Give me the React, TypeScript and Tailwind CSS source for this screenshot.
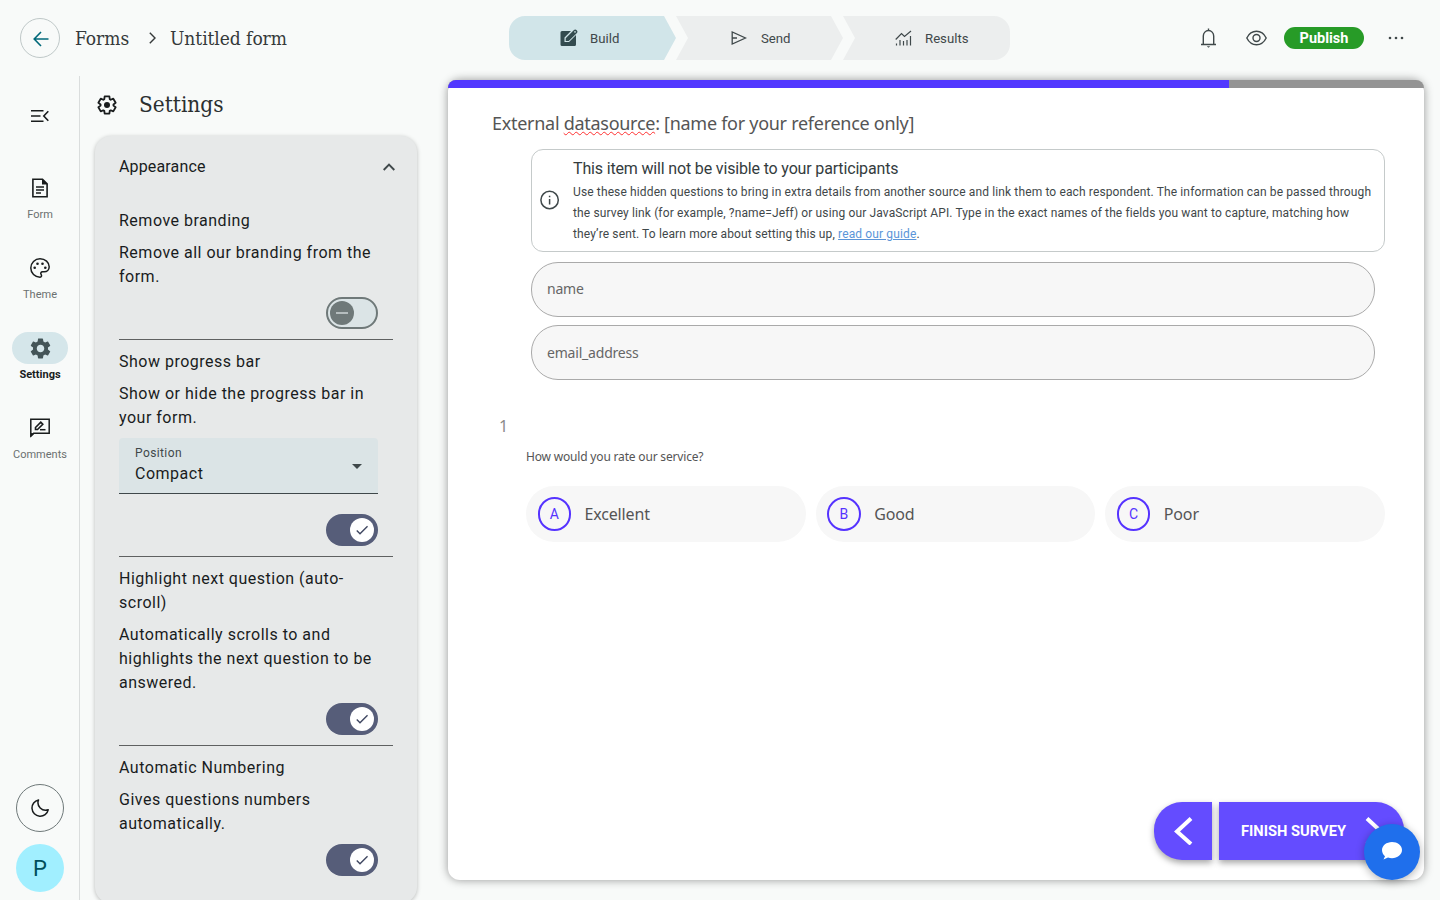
import type { ReactNode } from 'react';
import { MdSettings, MdCheck } from 'react-icons/md';

interface SettingProps {
  title: ReactNode;
  description: ReactNode;
  enabled: boolean;
  last?: boolean;
  children?: ReactNode;
}

function Toggle({ enabled }: { enabled: boolean }) {
  if (!enabled) {
    return (
      <div className="w-[52px] h-8 rounded-full border-2 border-[#6f7979] bg-[#dbe4e6] flex items-center pl-0.5">
        <div className="w-6 h-6 rounded-full bg-[#6f7979] flex items-center justify-center">
          <div className="w-3 h-0.5 bg-[#b5bdbe]" />
        </div>
      </div>
    );
  }
  return (
    <div className="w-[52px] h-8 rounded-full bg-[#565d79] flex items-center justify-end pr-1">
      <div className="w-6 h-6 rounded-full bg-white flex items-center justify-center">
        <MdCheck className="w-4 h-4 text-[#3e4660]" />
      </div>
    </div>
  );
}

function Setting({ title, description, enabled, last, children }: SettingProps) {
  return (
    <div className={last ? 'pb-[27px]' : 'pb-[9px] mb-[10px] border-b border-[#5f6161]'}>
      <h4 className="w-[259px]">{title}</h4>
      <p className="w-[259px] mt-2">{description}</p>
      {children}
      <div className={`flex justify-end w-[259px] ${children ? 'mt-5' : 'mt-2'} ${last ? '' : 'mb-px'}`}>
        <Toggle enabled={enabled} />
      </div>
    </div>
  );
}

function Header() {
  return (
    <header className="h-[76px] shrink-0 flex items-center pl-5 pr-9 relative">
      <div className="w-10 h-10 rounded-full border border-[#bfc8c8] flex items-center justify-center">
        <svg className="w-4 h-4 ml-0.5 mt-px text-[#006879]" viewBox="0 0 16 16" fill="none" stroke="currentColor" strokeWidth="1.600">
          <path d="M15.500 8H1.500M8 1 1.200 8 8 15" />
        </svg>
      </div>
      <nav className="flex items-center ml-[15px] text-[#35393a] font-['Roboto_Slab','DejaVu_Serif_Condensed','DejaVu_Serif',serif] font-light text-[19px]">
        <span className="w-[55px]">Forms</span>
        <svg className="w-[7px] h-3 ml-[19px] mr-[14px]" viewBox="0 0 7 12" fill="none" stroke="currentColor" strokeWidth="1.4">
          <path d="M.8.7 6 6 .8 11.3" />
        </svg>
        <span className="tracking-[-0.05px]">Untitled form</span>
      </nav>

      {/* Build / Send / Results */}
      <div className="absolute left-[509px] top-4 flex w-[501px] h-11 rounded-2xl overflow-hidden text-[13.2px] text-[#3f484a]">
        <div className="w-[167px] flex items-center pl-[51px] bg-[#d1e5e9] [clip-path:polygon(0_0,155px_0,100%_50%,155px_100%,0_100%)]">
          <svg className="w-[18px] h-[18px] mr-3" viewBox="0 0 18 18" fill="#334b4f">
            <path d="M2 2h9L4.500 8.500V13H9l7-7v9.500a1.500 1.500 0 0 1-1.500 1.500H2A1.500 1.500 0 0 1 .5 15.500v-12A1.500 1.500 0 0 1 2 2Z" />
            <path d="M5.700 9.200 13.700 1.200a2 2 0 0 1 3 3L8.700 12H5.700Z" />
            <circle cx="15" cy="2.900" r=".8" fill="#d1e5e9" />
          </svg>
          <span className="pt-0.5">Build</span>
        </div>
        <div className="w-[167px] flex items-center pl-[55px] bg-[#eceeee] [clip-path:polygon(0_0,155px_0,100%_50%,155px_100%,0_100%,12px_50%)]">
          <svg className="w-4 h-4 mr-[14px]" viewBox="0 0 16 16" fill="none" stroke="currentColor" strokeWidth="1.3">
            <path d="M1.200 1.900v12.200L14.500 8ZM1.200 8H6" />
          </svg>
          <span className="pt-0.5">Send</span>
        </div>
        <div className="w-[167px] flex items-center pl-[52px] bg-[#eceeee] [clip-path:polygon(0_0,100%_0,100%_100%,0_100%,12px_50%)]">
          <svg className="w-[17px] h-4 mr-[13px]" viewBox="0 0 17 16" fill="none" stroke="currentColor" strokeWidth="1.2">
            <path d="M.7 9.500 6.500 3.500 9.500 6.500 16 1" />
            <path d="M1.500 13.500V15.500M5 10v5.500M8.500 11v4.500M12 10v5.500M15.500 6v9.500" />
          </svg>
          <span className="pt-0.5">Results</span>
        </div>
      </div>

      <div className="flex items-center ml-auto text-[#3f484a]">
        <svg className="w-4 h-5" viewBox="0 0 16 20" fill="none" stroke="currentColor" strokeWidth="1.4">
          <path d="M2.300 16V8a5.200 5.500 0 0 1 10.400 0v8M0 16.500h15M7.500 .5V3" />
          <path d="M5.800 18.200h3.400L7.500 19.700Z" fill="currentColor" stroke="none" />
        </svg>
        <svg className="w-[21px] h-4 ml-[29px] mb-px" viewBox="0 0 21 16" fill="none" stroke="currentColor" strokeWidth="1.4">
          <path d="M.8 8C3 3.600 6.400 1.300 10.500 1.300S18 3.600 20.200 8C18 12.400 14.600 14.700 10.500 14.700S3 12.400.8 8Z" />
          <circle cx="10.500" cy="8" r="3.500" />
        </svg>
        <button className="w-20 h-[22px] ml-[17px] rounded-full bg-[#279b27] text-white font-bold text-[14.5px] leading-[22px] pt-px">
          Publish
        </button>
        <svg className="w-4 h-1 ml-6" viewBox="0 0 16 4" fill="currentColor">
          <circle cx="2" cy="2" r="1.300" />
          <circle cx="8" cy="2" r="1.300" />
          <circle cx="14" cy="2" r="1.300" />
        </svg>
      </div>
    </header>
  );
}

const navItems = [
  {
    label: 'Form',
    icon: (
      <svg className="w-5 h-5" viewBox="0 0 20 20" fill="none" stroke="currentColor" strokeWidth="1.600">
        <path d="M2.900 1.300h9.600l4.600 4.600v12.800H2.900Z" />
        <path d="M12 1v5.500h5.500Z" fill="currentColor" stroke="none" />
        <path d="M6 9h8M6 12h8M6 15h5" strokeWidth="1.500" />
      </svg>
    ),
  },
  {
    label: 'Theme',
    icon: (
      <svg className="w-5 h-5" viewBox="0 0 20 20" fill="none" stroke="currentColor" strokeWidth="1.500">
        <path d="M10 19.200A9.200 9.200 0 0 1 10 .8c5.200 0 9.200 3.500 9.200 8 0 3-2.200 5-5 5h-1.700c-1.500 0-2.200 1.300-1.400 2.500.9 1.300.4 2.900-1.100 2.900Z" />
        <g fill="currentColor" stroke="none">
          <circle cx="4.700" cy="9.700" r="1.300" />
          <circle cx="7.500" cy="5.700" r="1.300" />
          <circle cx="12.500" cy="5.700" r="1.300" />
          <circle cx="15.300" cy="9.700" r="1.300" />
        </g>
      </svg>
    ),
  },
  { label: 'Settings', active: true, icon: <MdSettings className="w-[25px] h-[25px] text-[#445558]" /> },
  {
    label: 'Comments',
    icon: (
      <svg className="w-5 h-5" viewBox="0 0 20 20" fill="none" stroke="currentColor" strokeWidth="1.500">
        <path d="M.8 18V1.300h18.400v14H3.700Z" />
        <path d="M1 15v4l3.500-3.500Z" fill="currentColor" stroke="none" />
        <path d="M5.500 11.500v-2L10.800 4.200l2 2L7.500 11.500Z" strokeWidth="1.600" />
        <path d="M10 11.700h5.500" />
      </svg>
    ),
  },
];

function Sidebar() {
  return (
    <aside className="w-20 shrink-0 border-r border-[#dadddd] flex flex-col items-center pl-px pb-2 text-[#191c1d]">
      <svg className="w-[18px] h-3 mt-[34px] mb-[50px]" viewBox="0 0 18 12" fill="none" stroke="currentColor" strokeWidth="1.600">
        <path d="M0 .8h12.500M0 6h9.500M0 11.200h12.500M17.300 1.300 12.800 6l4.500 4.700" />
      </svg>
      {navItems.map((item) => (
        <div key={item.label} className="h-20 flex flex-col items-center">
          <div
            className={`w-14 h-8 rounded-full flex items-center justify-center ${item.active ? 'bg-[#d5e6ea]' : ''}`}
          >
            {item.icon}
          </div>
          <span
            className={`mt-[3px] text-[11px] leading-4 ${item.active ? 'font-bold text-[#191c1d]' : 'text-[#6b7070]'}`}
          >
            {item.label}
          </span>
        </div>
      ))}
      <div className="mt-auto w-12 h-12 rounded-full border border-[#6f7979] flex items-center justify-center">
        <svg className="w-[18px] h-[18px]" viewBox="0 0 18 18" fill="none" stroke="currentColor" strokeWidth="1.500" strokeLinejoin="round">
          <path d="M7.500 1A8.200 8.200 0 1 0 17.200 10.800 7.600 7.600 0 0 1 7.500 1Z" />
        </svg>
      </div>
      <div className="mt-3 w-12 h-12 shrink-0 rounded-full bg-[#a1efff] flex items-center justify-center text-[22px] text-[#004e5b]">
        P
      </div>
    </aside>
  );
}

function SettingsPanel() {
  return (
    <section className="w-[322px] ml-[15px] shrink-0 text-[#191c1d]">
      <div className="h-[60px] flex items-center pb-0.5">
        <svg className="w-6 h-6" viewBox="0 0 24 24" fill="none" stroke="currentColor" strokeWidth="2.100" strokeLinejoin="round">
          <path d="m9.250 22-.4-3.200q-.325-.125-.612-.3-.288-.175-.563-.375L4.700 19.375l-2.750-4.750 2.575-1.950Q4.500 12.500 4.500 12.337v-.675q0-.162.025-.337L1.950 9.375l2.750-4.750 2.975 1.250q.275-.2.575-.375.3-.175.6-.3l.4-3.200h5.500l.4 3.200q.325.125.613.3.287.175.562.375l2.975-1.250 2.750 4.750-2.575 1.950q.025.175.025.337v.675q0 .163-.05.338l2.575 1.950-2.750 4.750-2.950-1.250q-.275.200-.575.375-.3.175-.6.300l-.4 3.200Z" transform="translate(1.700 1.700) scale(.86)" />
          <circle cx="12" cy="12" r="3" fill="currentColor" stroke="none" />
        </svg>
        <h2 className="ml-5 text-[#2b2f30] font-['Roboto_Slab','DejaVu_Serif_Condensed','DejaVu_Serif',serif] font-light text-[22.4px]">
          Settings
        </h2>
      </div>

      <div className="rounded-2xl bg-[#e7e9e9] px-6 shadow-[0_1px_4px_rgba(0,0,0,0.25)] text-base leading-6 tracking-[0.5px]">
        <div className="h-[73px] flex justify-between pt-[19px] tracking-[0.15px]">
          <h3>Appearance</h3>
          <svg className="w-3 h-2 mt-2 mr-[-2px]" viewBox="0 0 12 8" fill="none" stroke="#3f484a" strokeWidth="1.900">
            <path d="M.7 7 6 1.700 11.300 7" />
          </svg>
        </div>

        <Setting title="Remove branding" description="Remove all our branding from the form." enabled={false} />
        <Setting title="Show progress bar" description="Show or hide the progress bar in your form." enabled>
          <div className="w-[259px] h-14 mt-2 rounded-t bg-[#dbe4e6] border-b border-[#3f484a] flex items-center justify-between px-4">
            <div>
              <div className="text-xs leading-4 mb-px tracking-[0.4px] text-[#3f484a]">Position</div>
              <div>Compact</div>
            </div>
            <svg className="w-2.5 h-[5px] mt-px" viewBox="0 0 10 5" fill="#3f484a">
              <path d="M0 0h10L5 5Z" />
            </svg>
          </div>
        </Setting>
        <Setting
          title="Highlight next question (auto-scroll)"
          description="Automatically scrolls to and highlights the next question to be answered."
          enabled
        />
        <Setting title="Automatic Numbering" description="Gives questions numbers automatically." enabled last />
      </div>
    </section>
  );
}

function DatasourceQuestion() {
  return (
    <div className="pl-11">
      <h1 className="pt-[21px] text-[18px] leading-7 tracking-[-0.28px] text-[#555]">
        External{' '}
        <span className="underline decoration-wavy decoration-[#ff3030] decoration-1 underline-offset-1">datasource</span>:
        [name for your reference only]
      </h1>
      <div className="ml-[39px] mt-3 w-[854px] h-[103px] rounded-xl border border-[#c5caca] flex items-center text-[#3f484a] font-[Roboto,sans-serif]">
        <svg className="w-5 h-5 ml-2 mr-[13px] mb-0.5 shrink-0" viewBox="0 0 20 20" fill="none" stroke="currentColor" strokeWidth="1.500">
          <circle cx="9.600" cy="10" r="8.700" />
          <path d="M9.600 9v5.500M9.600 5.700v1.600" />
        </svg>
        <div className="whitespace-nowrap">
          <h5 className="text-base leading-6 tracking-[-0.16px] text-[#343c3e]">This item will not be visible to your participants</h5>
          <p className="pt-px -mb-px text-xs leading-[21px] tracking-[0.13px]">
            Use these hidden questions to bring in extra details from another source and link them to each respondent. The information can be passed through
            <br />
            the survey link (for example, ?name=Jeff) or using our JavaScript API. Type in the exact names of the fields you want to capture, matching how
            <br />
            they’re sent. To learn more about setting this up,{' '}
            <a className="underline text-[#5b95d8]">read our guide</a>.
          </p>
        </div>
      </div>
      {['name', 'email_address'].map((field) => (
        <div
          key={field}
          className="ml-[39px] mt-[10px] mb-[-2px] w-[844px] h-[55px] rounded-[27px] border border-[#aaa] bg-[#f7f7f7] flex items-center pl-[15px] pb-px last:pb-0 text-sm tracking-[-0.2px] text-[#666]"
        >
          {field}
        </div>
      ))}
    </div>
  );
}

const answers = [
  { letter: 'A', text: 'Excellent' },
  { letter: 'B', text: 'Good' },
  { letter: 'C', text: 'Poor' },
];

function RatingQuestion() {
  return (
    <div className="pt-9 pr-[39px] text-[#555]">
      <div className="pl-[51px] text-base leading-6 text-[#8a8a8a]">1</div>
      <div className="pl-[78px] mt-[10px] text-xs leading-[18px] tracking-[-0.18px]">How would you rate our service?</div>
      <div className="pl-[78px] mt-5 grid grid-cols-3 gap-2.5">
        {answers.map((answer) => (
          <div key={answer.letter} className="h-14 rounded-[28px] bg-[#f7f7f7] flex items-center pl-[11.5px]">
            <div className="w-[33.5px] h-[33.5px] rounded-full border-2 border-[#5533ff] text-[#5533ff] text-sm font-[Roboto,sans-serif] flex items-center justify-center">
              {answer.letter}
            </div>
            <span className="ml-[13.5px] text-base tracking-[-0.16px]">{answer.text}</span>
          </div>
        ))}
      </div>
    </div>
  );
}

export default function App() {
  return (
    <div className="h-screen overflow-hidden flex flex-col bg-[#f8faf9] font-[Roboto,sans-serif]">
      <Header />
      <div className="flex-1 min-h-0 flex items-stretch">
        <Sidebar />
        <SettingsPanel />
        <main className="relative w-[976px] h-[800px] mt-1 ml-[31px] rounded-xl bg-white shadow-[0_0_10px_rgba(0,0,0,0.4)] font-['Noto_Sans','Open_Sans',sans-serif]">
          <div className="h-2 bg-[#949494] rounded-t-xl overflow-hidden">
            <div className="h-full w-4/5 bg-[#5238ff]" />
          </div>
          <DatasourceQuestion />
          <RatingQuestion />

          <div className="absolute right-5 bottom-5 flex gap-[7px] text-white font-[Roboto,sans-serif]">
            <div className="w-[58px] h-[58px] rounded-l-[28px] bg-[#644cff] shadow-[0_3px_6px_rgba(0,0,0,0.35)] flex items-center justify-center">
              <svg className="w-5 h-7" viewBox="0 0 20 28" fill="none" stroke="currentColor" strokeWidth="4">
                <path d="M18 1.500 4 14.500 18 27" />
              </svg>
            </div>
            <div className="w-[185px] h-[58px] rounded-r-[28px] bg-[#644cff] shadow-[0_3px_6px_rgba(0,0,0,0.35)] flex items-center pl-[22px]">
              <span className="text-[14.7px] font-bold">FINISH SURVEY</span>
              <svg className="w-5 h-7 ml-[19px]" viewBox="0 0 20 28" fill="none" stroke="currentColor" strokeWidth="4">
                <path d="M2 1.500 16 14.500 2 27" />
              </svg>
            </div>
          </div>
        </main>
      </div>

      {/* Support chat */}
      <div className="fixed right-5 bottom-5 w-14 h-14 rounded-full bg-[#1f6fec] shadow-[0_2px_8px_rgba(0,0,0,0.3)] flex items-center justify-center">
        <svg className="w-5 h-[18px] mb-0.5" viewBox="0 0 20 18" fill="#fff">
          <path d="M10 0C4.500 0 0 3.600 0 8c0 2.500 1.200 4.800 3 6.300L1.500 17.500 6 15.600c1.200.4 2.600.6 4 .6 5.500 0 10-3.700 10-8.200S15.500 0 10 0Z" />
        </svg>
      </div>
    </div>
  );
}
